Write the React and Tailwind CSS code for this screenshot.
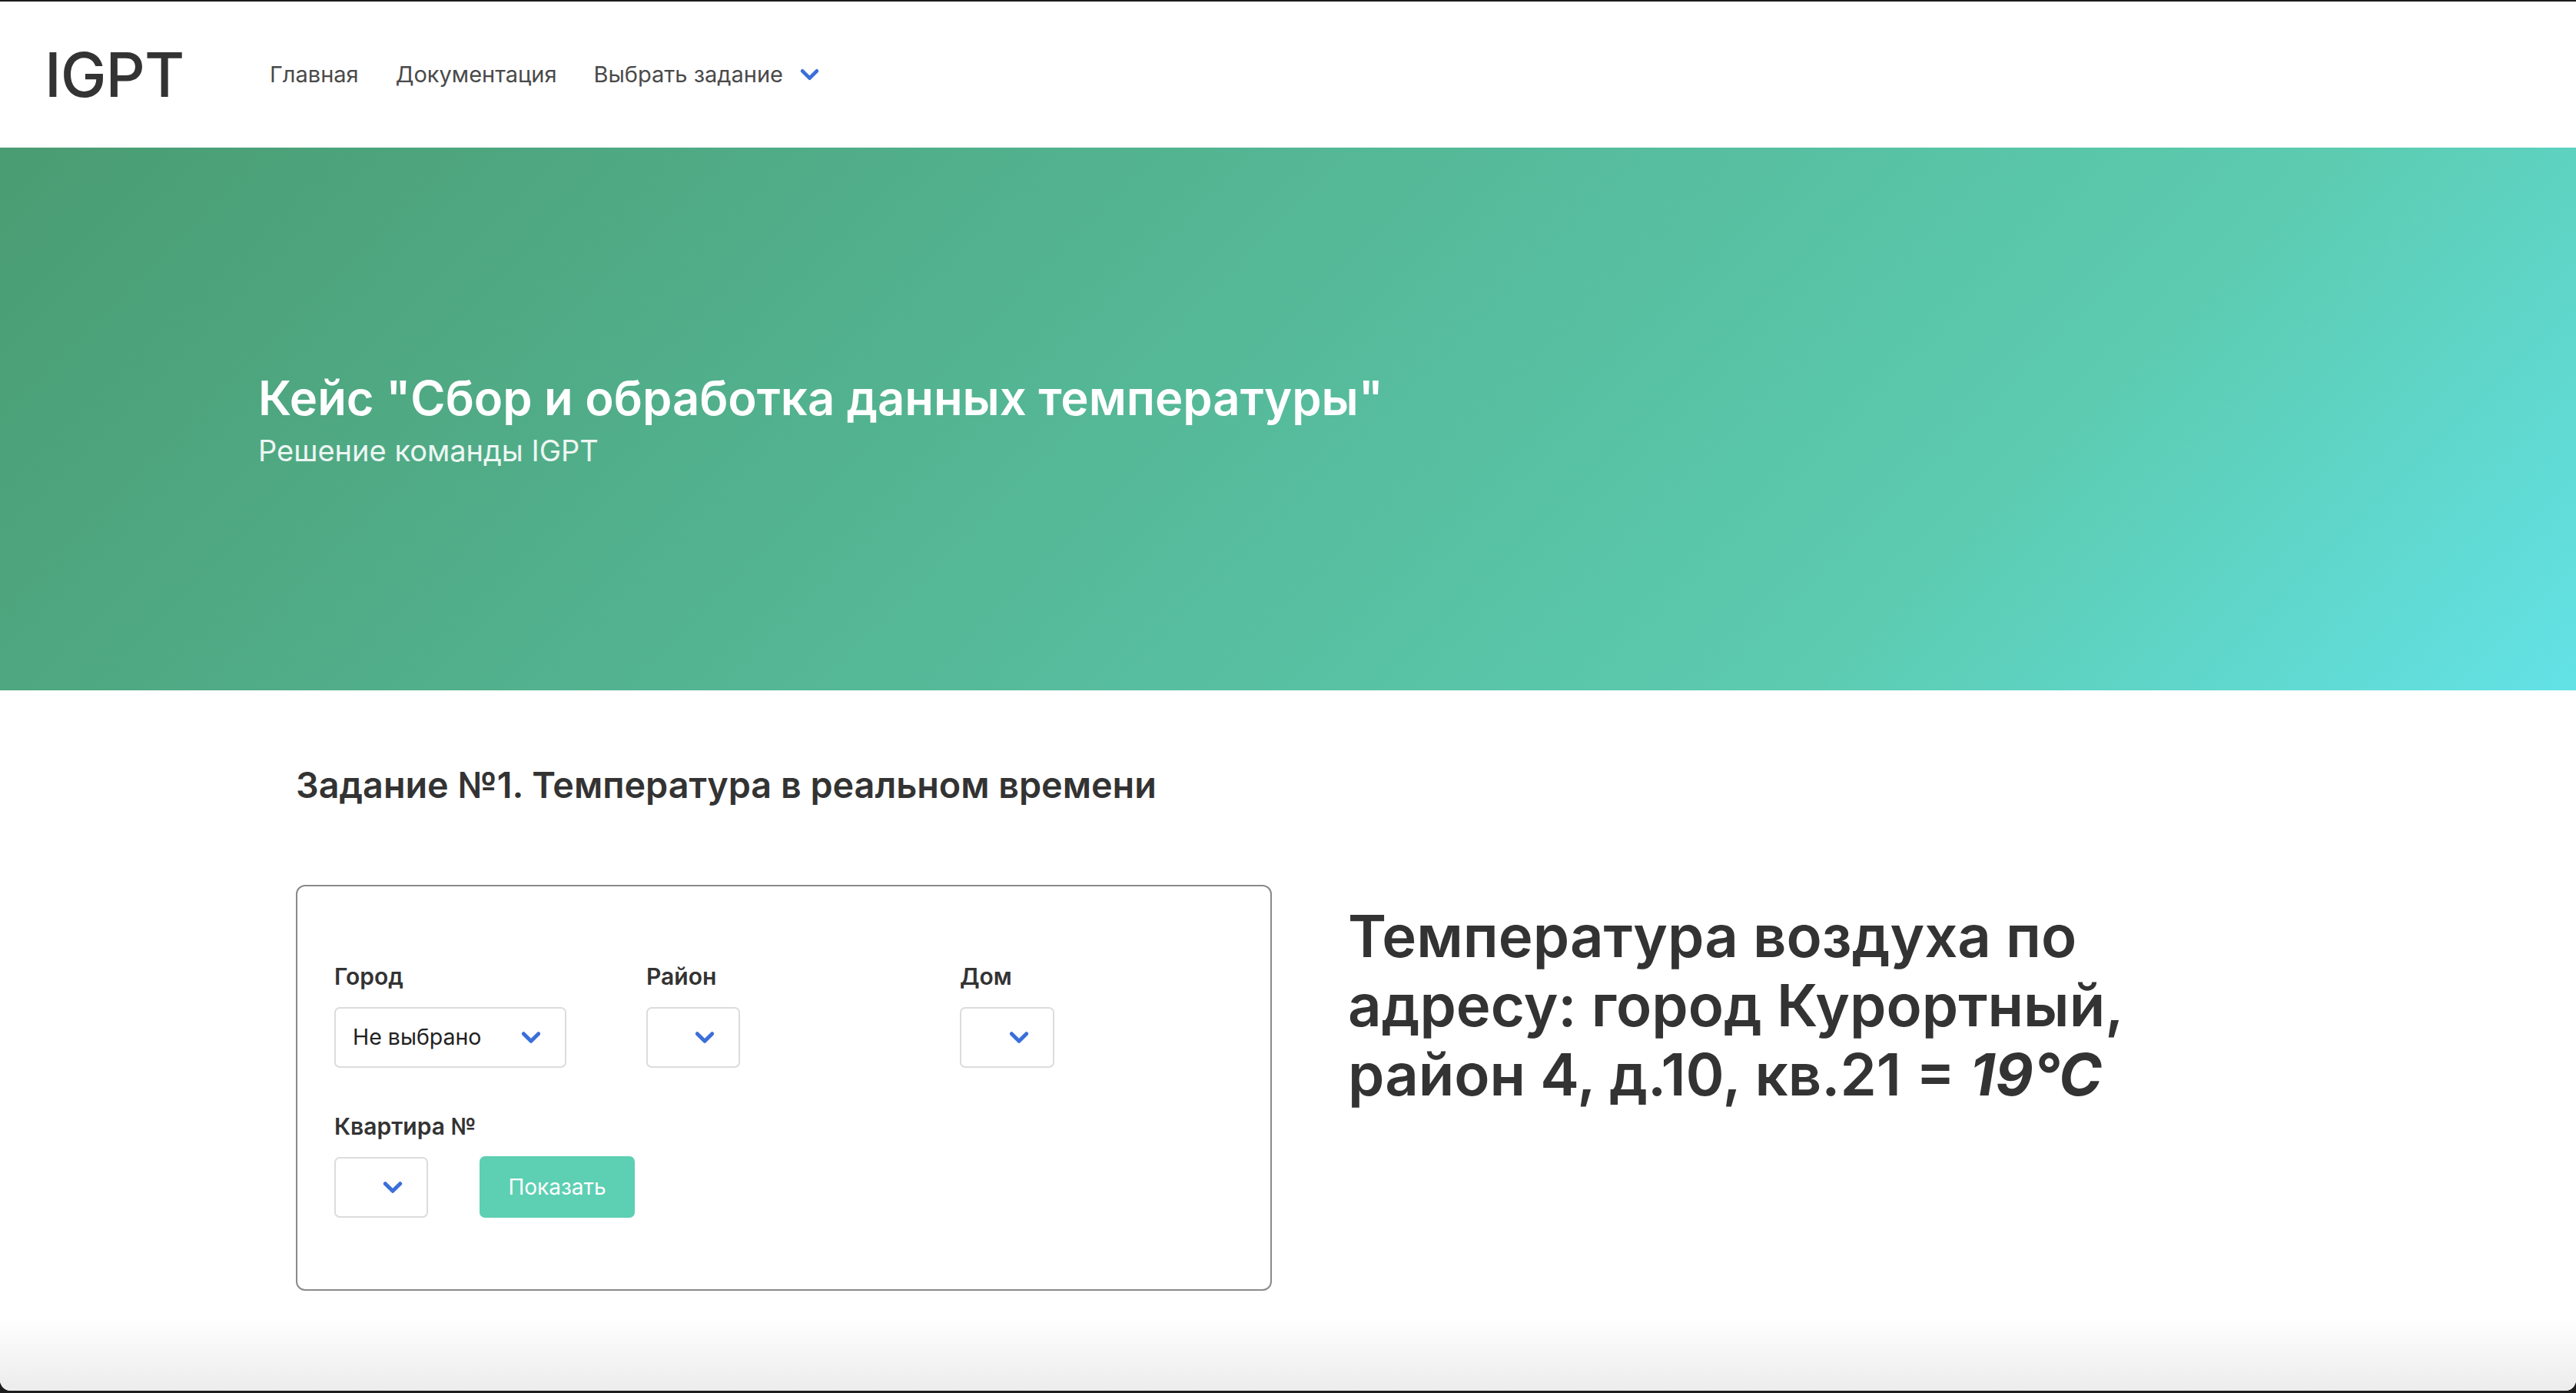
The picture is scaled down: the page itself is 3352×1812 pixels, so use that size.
import React from "react";

function Chevron({ className }) {
  return (
    <svg
      viewBox="0 0 26 17"
      className={className}
      fill="none"
      stroke="currentColor"
      strokeWidth="4.6"
      strokeLinecap="round"
      strokeLinejoin="round"
    >
      <polyline points="4,4 13,13 22,4" />
    </svg>
  );
}

function Field({ label, width, value, className = "" }) {
  return (
    <div className={className}>
      <div className="text-[30px] leading-[36px] font-semibold text-[#333] whitespace-nowrap">{label}</div>
      <div
        className={`mt-[22px] h-[79px] ${width} border-2 border-[#dcdcdc] rounded-[7px] flex items-center justify-between pl-[22px] pr-[30px]`}
      >
        <span className="text-[28.5px] text-[#222]">{value}</span>
        <Chevron className="w-[28px] h-[19px] text-[#3b6fd9]" />
      </div>
    </div>
  );
}

export default function App() {
  return (
    <div className="h-[1812px] bg-[#1c1c1c] flex flex-col pt-[2px] pb-[3px] font-['Inter','Noto_Sans',sans-serif]">
      <div className="flex-1 flex flex-col bg-white rounded-b-[14px] overflow-hidden">
        {/* header */}
        <header className="h-[190px] flex items-center pl-[58px]">
          <div className="w-[293px] text-[80px] leading-none font-medium text-[#333] tracking-[-1px]">IGPT</div>
          <nav className="flex items-center gap-[48px] text-[29px] text-[#4a4a4a]">
            <a>Главная</a>
            <a>Документация</a>
            <a className="flex items-center gap-[21px]">
              Выбрать задание
              <Chevron className="w-[27px] h-[18px] text-[#3b6fd9]" />
            </a>
          </nav>
        </header>

        {/* hero */}
        <section className="h-[706px] flex flex-col justify-center pl-[336px] bg-[linear-gradient(135deg,#4a9c72_0%,#5ccbb0_75%,#63e2e6_100%)]">
          <h1 className="text-[61.5px] leading-[72px] font-semibold text-white">
            Кейс "Сбор и обработка данных температуры"
          </h1>
          <p className="mt-[10px] text-[38px] leading-[44px] text-white/90">Решение команды IGPT</p>
        </section>

        {/* task */}
        <main className="flex-1 pl-[385px] pt-[95px]">
          <h2 className="text-[46.7px] leading-[56px] font-semibold text-[#333]">
            Задание №1. Температура в реальном времени
          </h2>

          <div className="mt-[102px] flex items-start">
            <div className="w-[1270px] border-2 border-[#8a8a8a] rounded-[12px] pt-[99px] pb-[93px] pl-[48px]">
              <div className="flex">
                <Field label="Город" value="Не выбрано" width="w-[302px]" className="w-[406px]" />
                <Field label="Район" value="" width="w-[122px]" className="w-[408px]" />
                <Field label="Дом" value="" width="w-[123px]" />
              </div>
              <div className="mt-[58px] flex items-end">
                <Field label="Квартира №" value="" width="w-[122px]" className="w-[189px]" />
                <button className="h-[80px] w-[202px] rounded-[7px] bg-[#5dcfb3] text-white text-[28px]">
                  Показать
                </button>
              </div>
            </div>

            <div className="ml-[99px] mt-[21px] text-[76px] leading-[90px] font-semibold text-[#333] whitespace-nowrap">
              <span className="block">Температура воздуха по</span>
              <span className="block">адресу: город Курортный,</span>
              <span className="block">
                район 4, д.10, кв.21 = <em className="italic font-bold">19°С</em>
              </span>
            </div>
          </div>
        </main>

        <div className="h-[96px] bg-[linear-gradient(to_bottom,#ffffff,#ececec)]" />
      </div>
    </div>
  );
}
